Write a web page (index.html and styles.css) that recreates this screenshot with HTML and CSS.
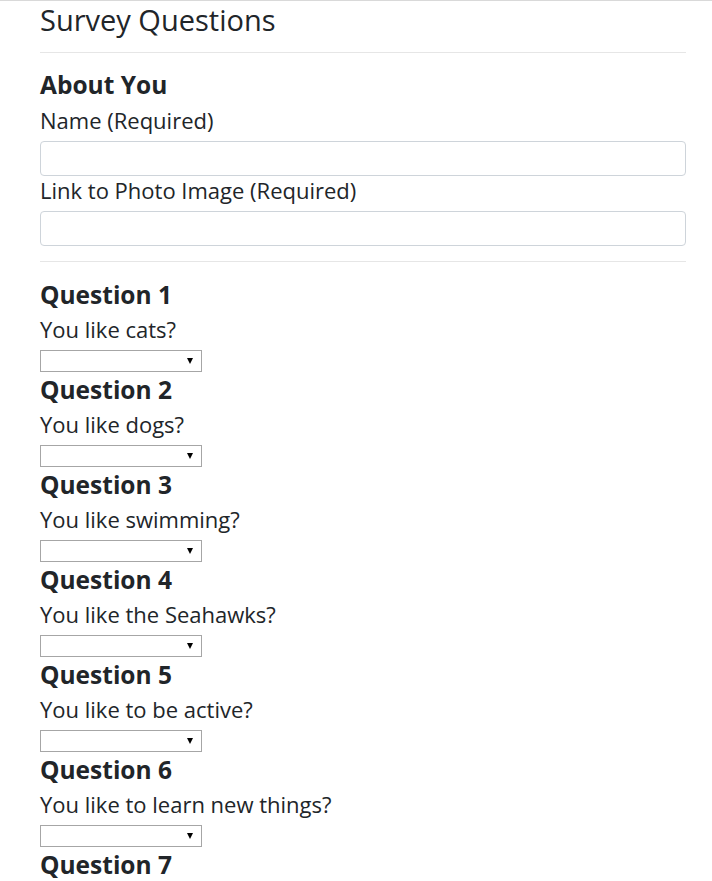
FILE: index.html
```html
<!DOCTYPE html>
<html>
<head>
<meta charset="utf-8">
<link rel="stylesheet" href="styles.css">
</head>
<body>
<div class="container">
  <h2 class="title">Survey Questions</h2>
  <hr class="rule">
  <h3 class="section about-head">About You</h3>
  <label class="label">Name (Required)</label>
  <input class="text-input" type="text">
  <label class="label label-tight">Link to Photo Image (Required)</label>
  <input class="text-input" type="text">
  <hr class="rule rule-low">
  <div class="question">
    <h3 class="section">Question 1</h3>
    <p class="label">You like cats?</p>
    <span class="select-wrap"><select class="choice"><option></option></select></span>
  </div>
  <div class="question">
    <h3 class="section">Question 2</h3>
    <p class="label">You like dogs?</p>
    <span class="select-wrap"><select class="choice"><option></option></select></span>
  </div>
  <div class="question">
    <h3 class="section">Question 3</h3>
    <p class="label">You like swimming?</p>
    <span class="select-wrap"><select class="choice"><option></option></select></span>
  </div>
  <div class="question">
    <h3 class="section">Question 4</h3>
    <p class="label">You like the Seahawks?</p>
    <span class="select-wrap"><select class="choice"><option></option></select></span>
  </div>
  <div class="question">
    <h3 class="section">Question 5</h3>
    <p class="label">You like to be active?</p>
    <span class="select-wrap"><select class="choice"><option></option></select></span>
  </div>
  <div class="question">
    <h3 class="section">Question 6</h3>
    <p class="label">You like to learn new things?</p>
    <span class="select-wrap"><select class="choice"><option></option></select></span>
  </div>
  <div class="question">
    <h3 class="section">Question 7</h3>
  </div>
</div>
</body>
</html>
```

FILE: styles.css
```css
html, body {
  margin: 0;
  padding: 0;
  background: #fff;
}
body {
  border-top: 1px solid #d9d9d9;
  font-family: "Open Sans", "Noto Sans", sans-serif;
  color: #212529;
}
.container {
  width: 646px;
  padding: 0 40px;
}
.title {
  font-size: 29px;
  font-weight: 400;
  line-height: 30px;
  padding-top: 4px;
  margin: 0;
}
.rule {
  border: 0;
  border-top: 1px solid #e6e6e6;
  margin: 17px 0 15px;
}
.rule-low {
  margin: 15px 0 16px;
}
.section {
  font-size: 24.5px;
  font-weight: 700;
  line-height: 26px;
  padding-top: 4px;
  margin: 0 0 5px 0;
}
.about-head {
  margin-bottom: 6px;
}
.label {
  display: block;
  font-size: 22px;
  line-height: 28px;
  padding-top: 2px;
  margin: 0 0 7px 0;
}
.label-tight {
  margin-top: -2px;
}
.text-input {
  display: block;
  box-sizing: border-box;
  width: 100%;
  height: 35px;
  border: 1px solid #ced4da;
  border-radius: 4px;
  margin: 0;
  background: #fff;
}
.question {
  display: flex;
  flex-direction: column;
  align-items: flex-start;
  padding-bottom: 1px;
}
.select-wrap {
  position: relative;
  display: block;
  width: 162px;
  height: 22px;
}
.select-wrap::after {
  content: "";
  position: absolute;
  right: 9px;
  top: 8px;
  border-left: 3.5px solid transparent;
  border-right: 3.5px solid transparent;
  border-top: 6px solid #000;
  pointer-events: none;
}
.choice {
  -webkit-appearance: none;
  appearance: none;
  display: block;
  box-sizing: border-box;
  width: 162px;
  height: 22px;
  border: 1px solid #a6a6a6;
  border-radius: 0;
  background: #fff;
  margin: 0;
  padding: 0;
}
```
